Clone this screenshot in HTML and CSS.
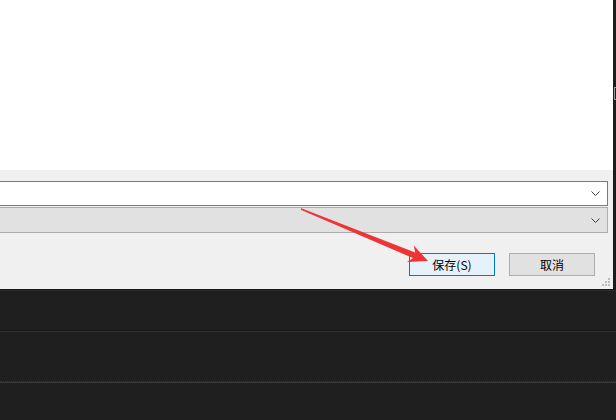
FILE: index.html
```html
<!DOCTYPE html>
<html lang="zh-CN">
<head>
<meta charset="utf-8">
<link rel="stylesheet" href="styles.css">
</head>
<body>
<div class="page">
  <div class="screen">
    <div class="dialog">
      <div class="content"></div>
      <div class="footer">
        <div class="combo combo-edit">
          <svg class="chev" width="9" height="5" viewBox="0 0 9 5"><path d="M0.5 0.5 L4.5 4.5 L8.5 0.5" fill="none" stroke="#3c3c3c" stroke-width="1"/></svg>
        </div>
        <div class="combo combo-list">
          <svg class="chev" width="9" height="5" viewBox="0 0 9 5"><path d="M0.5 0.5 L4.5 4.5 L8.5 0.5" fill="none" stroke="#3c3c3c" stroke-width="1"/></svg>
        </div>
        <div class="buttons">
          <div class="btn btn-default">保存(S)</div>
          <div class="btn">取消</div>
        </div>
        <svg class="grip" width="9" height="9" viewBox="0 0 9 9">
          <rect x="6" y="0" width="2" height="2" fill="#bcbcbc"/>
          <rect x="3" y="3" width="2" height="2" fill="#bcbcbc"/>
          <rect x="6" y="3" width="2" height="2" fill="#bcbcbc"/>
          <rect x="0" y="6" width="2" height="2" fill="#bcbcbc"/>
          <rect x="3" y="6" width="2" height="2" fill="#bcbcbc"/>
          <rect x="6" y="6" width="2" height="2" fill="#bcbcbc"/>
        </svg>
      </div>
    </div>
    <div class="strip">
      <div class="strip-mark"></div>
    </div>
  </div>
  <div class="dark">
    <div class="dark-row first"></div>
    <div class="dark-row second"></div>
    <div class="dark-row third"></div>
  </div>
  <svg class="arrow" width="616" height="420" viewBox="0 0 616 420">
    <polygon points="301.3,208.3 415.2,252.5 413.8,245.5 428,261 407,262.1 413,258.1 300.7,209.7" fill="#ee3535"/>
  </svg>
</div>
</body>
</html>
```

FILE: styles.css
```css
html, body {
  margin: 0;
  padding: 0;
}
body {
  width: 616px;
  height: 420px;
  overflow: hidden;
  background: #1f1f1f;
  font-family: "Noto Sans CJK SC", "Microsoft YaHei", sans-serif;
}
.page {
  position: relative;
  width: 616px;
  height: 420px;
  display: flex;
  flex-direction: column;
}
.screen {
  display: flex;
  height: 289px;
}
.dialog {
  width: 613px;
  display: flex;
  flex-direction: column;
  overflow: hidden;
}
.content {
  height: 170px;
  background: #ffffff;
}
.footer {
  position: relative;
  flex: 1;
  background: #f0f0f0;
  padding: 11px 5px 0 0;
  display: flex;
  flex-direction: column;
}
.combo {
  margin-left: -2px;
  box-sizing: border-box;
  display: flex;
  align-items: center;
  justify-content: flex-end;
  padding-right: 7px;
}
.combo-edit {
  height: 25px;
  background: #ffffff;
  border: 1px solid #7a7a7a;
}
.combo-list {
  margin-top: 1px;
  height: 26px;
  background: #e1e1e1;
  border: 1px solid #adadad;
}
.chev {
  display: block;
}
.buttons {
  margin-top: 20px;
  display: flex;
  justify-content: flex-end;
  gap: 14px;
  padding-right: 13px;
}
.btn {
  box-sizing: border-box;
  width: 86px;
  height: 23px;
  background: #e1e1e1;
  border: 1px solid #adadad;
  font-size: 12px;
  color: #000;
  display: flex;
  align-items: center;
  justify-content: center;
  line-height: 1;
}
.btn-default {
  background: #e5f1fb;
  border-color: #0078d7;
}
.grip {
  position: absolute;
  right: 2px;
  bottom: 2px;
}
.strip {
  width: 3px;
  background: #1c1c1c;
  display: flex;
  flex-direction: column;
  padding-top: 87px;
  box-sizing: border-box;
}
.strip-mark {
  width: 2px;
  height: 13px;
  margin-left: 1px;
  border: 1px solid #9a9a9a;
  border-right: none;
  box-sizing: border-box;
}
.dark {
  flex: 1;
  display: flex;
  flex-direction: column;
  background: #1f1f1f;
}
.dark-row.first {
  height: 40px;
  border-top: 1px solid #161616;
  border-bottom: 1px solid #161616;
  box-shadow: inset 0 1px 0 #2b2b2b;
}
.dark-row.second {
  height: 49px;
  border-top: 1px solid #303030;
  border-bottom: 1px dotted #353535;
}
.dark-row.third {
  flex: 1;
  border-top: 1px solid #3a3a3a;
}
.arrow {
  position: absolute;
  left: 0;
  top: 0;
  pointer-events: none;
}
```
